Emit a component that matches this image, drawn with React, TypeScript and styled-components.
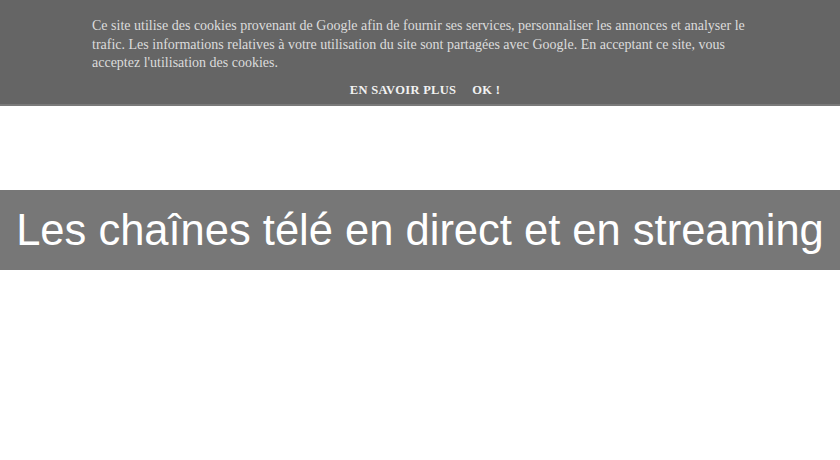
import React from "react";
import styled, { createGlobalStyle } from "styled-components";

const GlobalStyle = createGlobalStyle`
  html, body {
    margin: 0;
    padding: 0;
    background: #ffffff;
  }
`;

const Page = styled.div`
  width: 840px;
  height: 460px;
  overflow: hidden;
  display: flex;
  flex-direction: column;
  background: #ffffff;
`;

const CookieBar = styled.div`
  height: 106px;
  box-sizing: border-box;
  background: #656565;
  border-bottom: 2px solid #7a7a7a;
  padding: 17px 0 0 10px;
  display: flex;
  flex-direction: column;
  align-items: center;
`;

const CookieText = styled.p`
  width: 666px;
  margin: 0;
  font-family: "Liberation Serif", serif;
  font-size: 14px;
  line-height: 18.5px;
  color: #dcdcdc;
`;

const Actions = styled.div`
  display: flex;
  gap: 16px;
  margin-top: 10px;
`;

const ActionLink = styled.span`
  font-family: "Liberation Serif", serif;
  font-weight: bold;
  font-size: 12.5px;
  letter-spacing: 0.3px;
  color: #f2f2f2;
`;

const Spacer = styled.div<{ $h: number }>`
  height: ${(p) => p.$h}px;
  flex-shrink: 0;
`;

const TitleBand = styled.div`
  height: 80px;
  background: #777777;
  display: flex;
  align-items: center;
  justify-content: center;
`;

const Title = styled.h1`
  margin: 0;
  font-family: "Liberation Sans", Arial, sans-serif;
  font-weight: normal;
  font-size: 43.5px;
  color: #ffffff;
  white-space: nowrap;
`;

export default function App() {
  return (
    <>
      <GlobalStyle />
      <Page>
        <CookieBar>
          <CookieText>
            Ce site utilise des cookies provenant de Google afin de fournir ses services, personnaliser les annonces et analyser le
            trafic. Les informations relatives à votre utilisation du site sont partagées avec Google. En acceptant ce site, vous
            acceptez l'utilisation des cookies.
          </CookieText>
          <Actions>
            <ActionLink>EN SAVOIR PLUS</ActionLink>
            <ActionLink>OK !</ActionLink>
          </Actions>
        </CookieBar>
        <Spacer $h={84} />
        <TitleBand>
          <Title>Les chaînes télé en direct et en streaming</Title>
        </TitleBand>
      </Page>
    </>
  );
}
